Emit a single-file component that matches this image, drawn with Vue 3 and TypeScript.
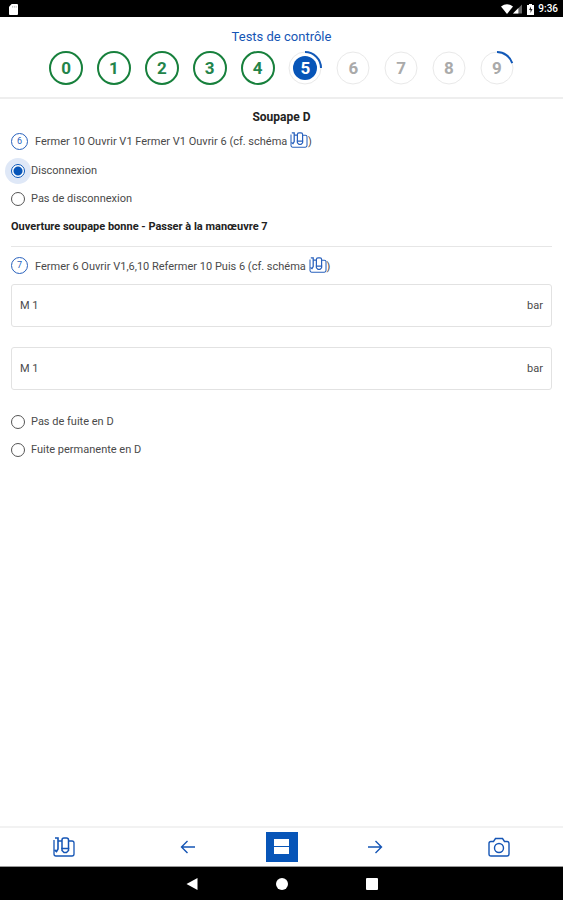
<script setup lang="ts">
import { ref, defineComponent, h } from 'vue'

interface Step {
  id: number
  state: 'done' | 'current' | 'todo'
  progress: number
}

const steps: Step[] = [
  { id: 0, state: 'done', progress: 0 },
  { id: 1, state: 'done', progress: 0 },
  { id: 2, state: 'done', progress: 0 },
  { id: 3, state: 'done', progress: 0 },
  { id: 4, state: 'done', progress: 0 },
  { id: 5, state: 'current', progress: 25 },
  { id: 6, state: 'todo', progress: 0 },
  { id: 7, state: 'todo', progress: 0 },
  { id: 8, state: 'todo', progress: 0 },
  { id: 9, state: 'todo', progress: 20 },
]

const disconnection = ref('yes')
const leak = ref('')
const firstPressure = ref('')
const secondPressure = ref('')

// Pipework diagram icon, shared by the instructions and the bottom bar
const SchemaIcon = defineComponent({
  render: () =>
    h('svg', { viewBox: '0 0 22 20', fill: 'none', stroke: 'currentColor', 'aria-hidden': 'true' }, [
      h('path', { d: 'M1 3V17Q1 19 3 19H19Q21 19 21 17V6Q21 4 19 4H16', 'stroke-width': 1.3 }),
      h('path', { d: 'M2 1H5V12L3.500 14.500L1.500 13', 'stroke-width': 1.6 }),
      h('path', { d: 'M5 4H9M9 12V3Q9 1 11 1H13.500Q15.500 1 15.500 3V12', 'stroke-width': 1.5 }),
      h('path', { d: 'M9 11.500H15.500V13.500L13.500 15.500H11L9 13.500Z', 'stroke-width': 1.5 }),
    ]),
})
</script>

<template>
  <div class="app">
    <div class="status">
      <svg class="sd" viewBox="0 0 10 12"><path d="M3 0H9Q10 0 10 1V11Q10 12 9 12H1Q0 12 0 11V3Z" fill="#fff" /><path d="M4 2V4M6 2V4M8 2V4" stroke="#bbb" /></svg>
      <div class="status-right">
        <svg class="wifi" viewBox="0 0 12 10"><path d="M0 2.500Q6-2 12 2.500L6 10Z" fill="#fff" /></svg>
        <svg class="signal" viewBox="0 0 10 10"><path d="M10 0V10H0Z" fill="#666" /><path d="M6 4V10H0Z" fill="#fff" /></svg>
        <svg class="battery" viewBox="0 0 7 11"><path d="M2 0H5V1H7V11H0V1H2Z" fill="#fff" /><path d="M4 2.500L2 6H3.500V9L5.500 5H4Z" fill="#222" /></svg>
        <span>9:36</span>
      </div>
    </div>

    <header class="header">
      <h1 class="title">Tests de contrôle</h1>
      <nav class="steps" aria-label="Étapes">
        <button v-for="step in steps" :key="step.id" type="button" class="step" :class="step.state">
          <svg class="ring" viewBox="0 0 34 34" aria-hidden="true">
            <circle class="track" cx="17" cy="17" r="16" />
            <circle
              v-if="step.progress"
              class="arc"
              cx="17"
              cy="17"
              r="16"
              pathLength="100"
              :stroke-dasharray="`${step.progress} 100`"
              transform="rotate(-90 17 17)"
            />
            <circle v-if="step.state === 'current'" class="disc" cx="17" cy="17" r="12" />
          </svg>
          <span class="digit">{{ step.id }}</span>
        </button>
      </nav>
    </header>

    <main class="content">
      <h2 class="section">Soupape D</h2>

      <div class="instruction">
        <span class="badge">6</span>
        <p class="text">Fermer 10 Ouvrir V1 Fermer V1 Ouvrir 6 (cf. schéma <SchemaIcon class="inline-icon" />)</p>
      </div>
      <div class="choices">
        <label class="choice"><input v-model="disconnection" class="radio" type="radio" name="disconnection" value="yes" />Disconnexion</label>
        <label class="choice"><input v-model="disconnection" class="radio" type="radio" name="disconnection" value="no" />Pas de disconnexion</label>
      </div>
      <p class="result">Ouverture soupape bonne - Passer à la manœuvre 7</p>

      <div class="instruction second">
        <span class="badge">7</span>
        <p class="text">Fermer 6 Ouvrir V1,6,10 Refermer 10 Puis 6 (cf. schéma <SchemaIcon class="inline-icon" />)</p>
      </div>
      <div class="fields">
        <div class="field">
          <label for="pressure-1">M 1</label>
          <input id="pressure-1" v-model="firstPressure" type="text" inputmode="decimal" />
          <span>bar</span>
        </div>
        <div class="field">
          <label for="pressure-2">M 1</label>
          <input id="pressure-2" v-model="secondPressure" type="text" inputmode="decimal" />
          <span>bar</span>
        </div>
      </div>
      <div class="choices">
        <label class="choice"><input v-model="leak" class="radio" type="radio" name="leak" value="none" />Pas de fuite en D</label>
        <label class="choice"><input v-model="leak" class="radio" type="radio" name="leak" value="permanent" />Fuite permanente en D</label>
      </div>
    </main>

    <nav class="toolbar">
      <button type="button" class="tool" aria-label="Schéma"><SchemaIcon class="tool-icon" /></button>
      <button type="button" class="tool" aria-label="Précédent">
        <svg class="arrow" viewBox="0 0 16 14"><path d="M15 7H1.500M7.500 1L1.500 7L7.500 13" /></svg>
      </button>
      <button type="button" class="tool menu" aria-label="Menu">
        <svg viewBox="0 0 32 30"><path d="M8 7H23V14H8ZM8 15H23V22H8Z" fill="#fff" /></svg>
      </button>
      <button type="button" class="tool" aria-label="Suivant">
        <svg class="arrow" viewBox="0 0 16 14"><path d="M1 7H14.500M8.500 1L14.500 7L8.500 13" /></svg>
      </button>
      <button type="button" class="tool" aria-label="Photo">
        <svg class="tool-icon camera" viewBox="0 0 22 20"><path d="M3 4.500H5.500L7.500 1.500H14.500L16.500 4.500H19Q21 4.500 21 6.500V17Q21 19 19 19H3Q1 19 1 17V6.500Q1 4.500 3 4.500Z" /><circle cx="11" cy="11" r="4.500" /></svg>
      </button>
    </nav>

    <div class="system">
      <button type="button" aria-label="Retour"><svg viewBox="0 0 12 12"><path d="M11.500 0V12L0.500 6Z" /></svg></button>
      <button type="button" aria-label="Accueil"><svg viewBox="0 0 12 12"><circle cx="6" cy="6" r="6" /></svg></button>
      <button type="button" aria-label="Applications"><svg viewBox="0 0 12 12"><rect width="12" height="12" rx="1" /></svg></button>
    </div>
  </div>
</template>

<style>
body {
  margin: 0;
  background: #fff;
}
</style>

<style scoped>
.app {
  display: flex;
  flex-direction: column;
  min-height: 100vh;
  font-family: Roboto, "Liberation Sans", sans-serif;
  font-size: 11px;
  line-height: 16px;
  color: #4a4a4a;
}
button {
  padding: 0;
  border: 0;
  background: none;
  font: inherit;
  cursor: pointer;
}
svg {
  display: block;
}
h1,
h2,
p {
  margin: 0;
}
.status {
  display: flex;
  align-items: center;
  justify-content: space-between;
  box-sizing: border-box;
  height: 17px;
  padding: 1px 5px 0 9px;
  background: #000;
  color: #fff;
  font-size: 10px;
  font-weight: 500;
}
.sd {
  width: 9px;
  height: 11px;
}
.status-right {
  display: flex;
  align-items: center;
}
.wifi {
  width: 12px;
  height: 10px;
}
.signal {
  width: 9px;
  height: 10px;
  margin-right: 5px;
}
.battery {
  width: 7px;
  height: 11px;
  margin-right: 4px;
}
.header {
  padding: 12px 0;
  border-bottom: 2px solid #eee;
}
.title {
  font-size: 13px;
  font-weight: 400;
  text-align: center;
  color: #1555b5;
}
.steps {
  display: grid;
  grid-template-columns: repeat(10, 1fr);
  justify-items: center;
  width: 85%;
  margin: 6px auto 0;
}
.step {
  display: grid;
  place-items: center;
  width: 34px;
  height: 34px;
  font-size: 17px;
  font-weight: 700;
}
.ring,
.digit {
  grid-area: 1 / 1;
}
.ring {
  width: 34px;
  height: 34px;
  fill: none;
}
.digit {
  z-index: 1;
}
.track {
  stroke: #e9e9e9;
  stroke-width: 1;
}
.arc {
  stroke: #1259b8;
  stroke-width: 2;
}
.disc {
  fill: #0755b8;
}
.done {
  color: #23844a;
}
.done .track {
  stroke: #17803c;
  stroke-width: 2;
}
.current {
  color: #fff;
}
.todo {
  color: #aaa;
}
.content {
  flex: 1;
  padding: 10px 11px;
}
.section {
  font-size: 12px;
  font-weight: 700;
  text-align: center;
  color: #222;
}
.instruction {
  display: flex;
  align-items: center;
  gap: 7px;
  height: 32px;
}
.badge {
  box-sizing: border-box;
  width: 17px;
  height: 17px;
  border: 1px solid #2861bd;
  border-radius: 50%;
  color: #2861bd;
  font-size: 9px;
  line-height: 15px;
  text-align: center;
}
.inline-icon {
  display: inline-block;
  width: 18px;
  height: 16px;
  vertical-align: -3px;
  color: #2861bd;
}
.choices {
  display: grid;
}
.choice {
  display: flex;
  align-items: center;
  gap: 6px;
  width: max-content;
  height: 28px;
}
.radio {
  appearance: none;
  width: 14px;
  height: 14px;
  margin: 0;
  border: 1px solid #555;
  border-radius: 50%;
  box-sizing: border-box;
}
.radio:checked {
  border-color: #0755b8;
  background: radial-gradient(circle, #0755b8 4px, #fff 5px);
  box-shadow: 0 0 0 6px #dfe8f7;
}
.result {
  padding: 6px 0 11px;
  border-bottom: 1px solid #e6e6e6;
  font-weight: 700;
  color: #222;
}
.second {
  height: 37px;
}
.fields {
  display: grid;
  gap: 20px;
  margin-bottom: 18px;
}
.field {
  display: flex;
  align-items: center;
  box-sizing: border-box;
  height: 43px;
  padding: 0 8px;
  border: 1px solid #e2e2e2;
  border-radius: 3px;
}
.field input {
  flex: 1;
  min-width: 0;
  border: 0;
  outline: 0;
  background: none;
  font: inherit;
}
.toolbar {
  display: grid;
  grid-template-columns: 128fr 120fr 67fr 120fr 128fr;
  place-items: center;
  height: 38px;
  border-top: 2px solid #f2f2f2;
  border-bottom: 1px solid #999;
  color: #1555b5;
}
.tool {
  color: inherit;
}
.tool-icon {
  width: 22px;
  height: 20px;
}
.arrow {
  width: 16px;
  height: 14px;
}
.arrow,
.camera {
  fill: none;
  stroke: #1555b5;
  stroke-width: 1.4;
}
.menu {
  width: 32px;
  height: 30px;
  background: #0755b8;
}
.system {
  display: flex;
  align-items: center;
  justify-content: center;
  gap: 78px;
  height: 33px;
  background: #000;
}
.system svg {
  width: 12px;
  height: 12px;
  fill: #fff;
}
</style>
